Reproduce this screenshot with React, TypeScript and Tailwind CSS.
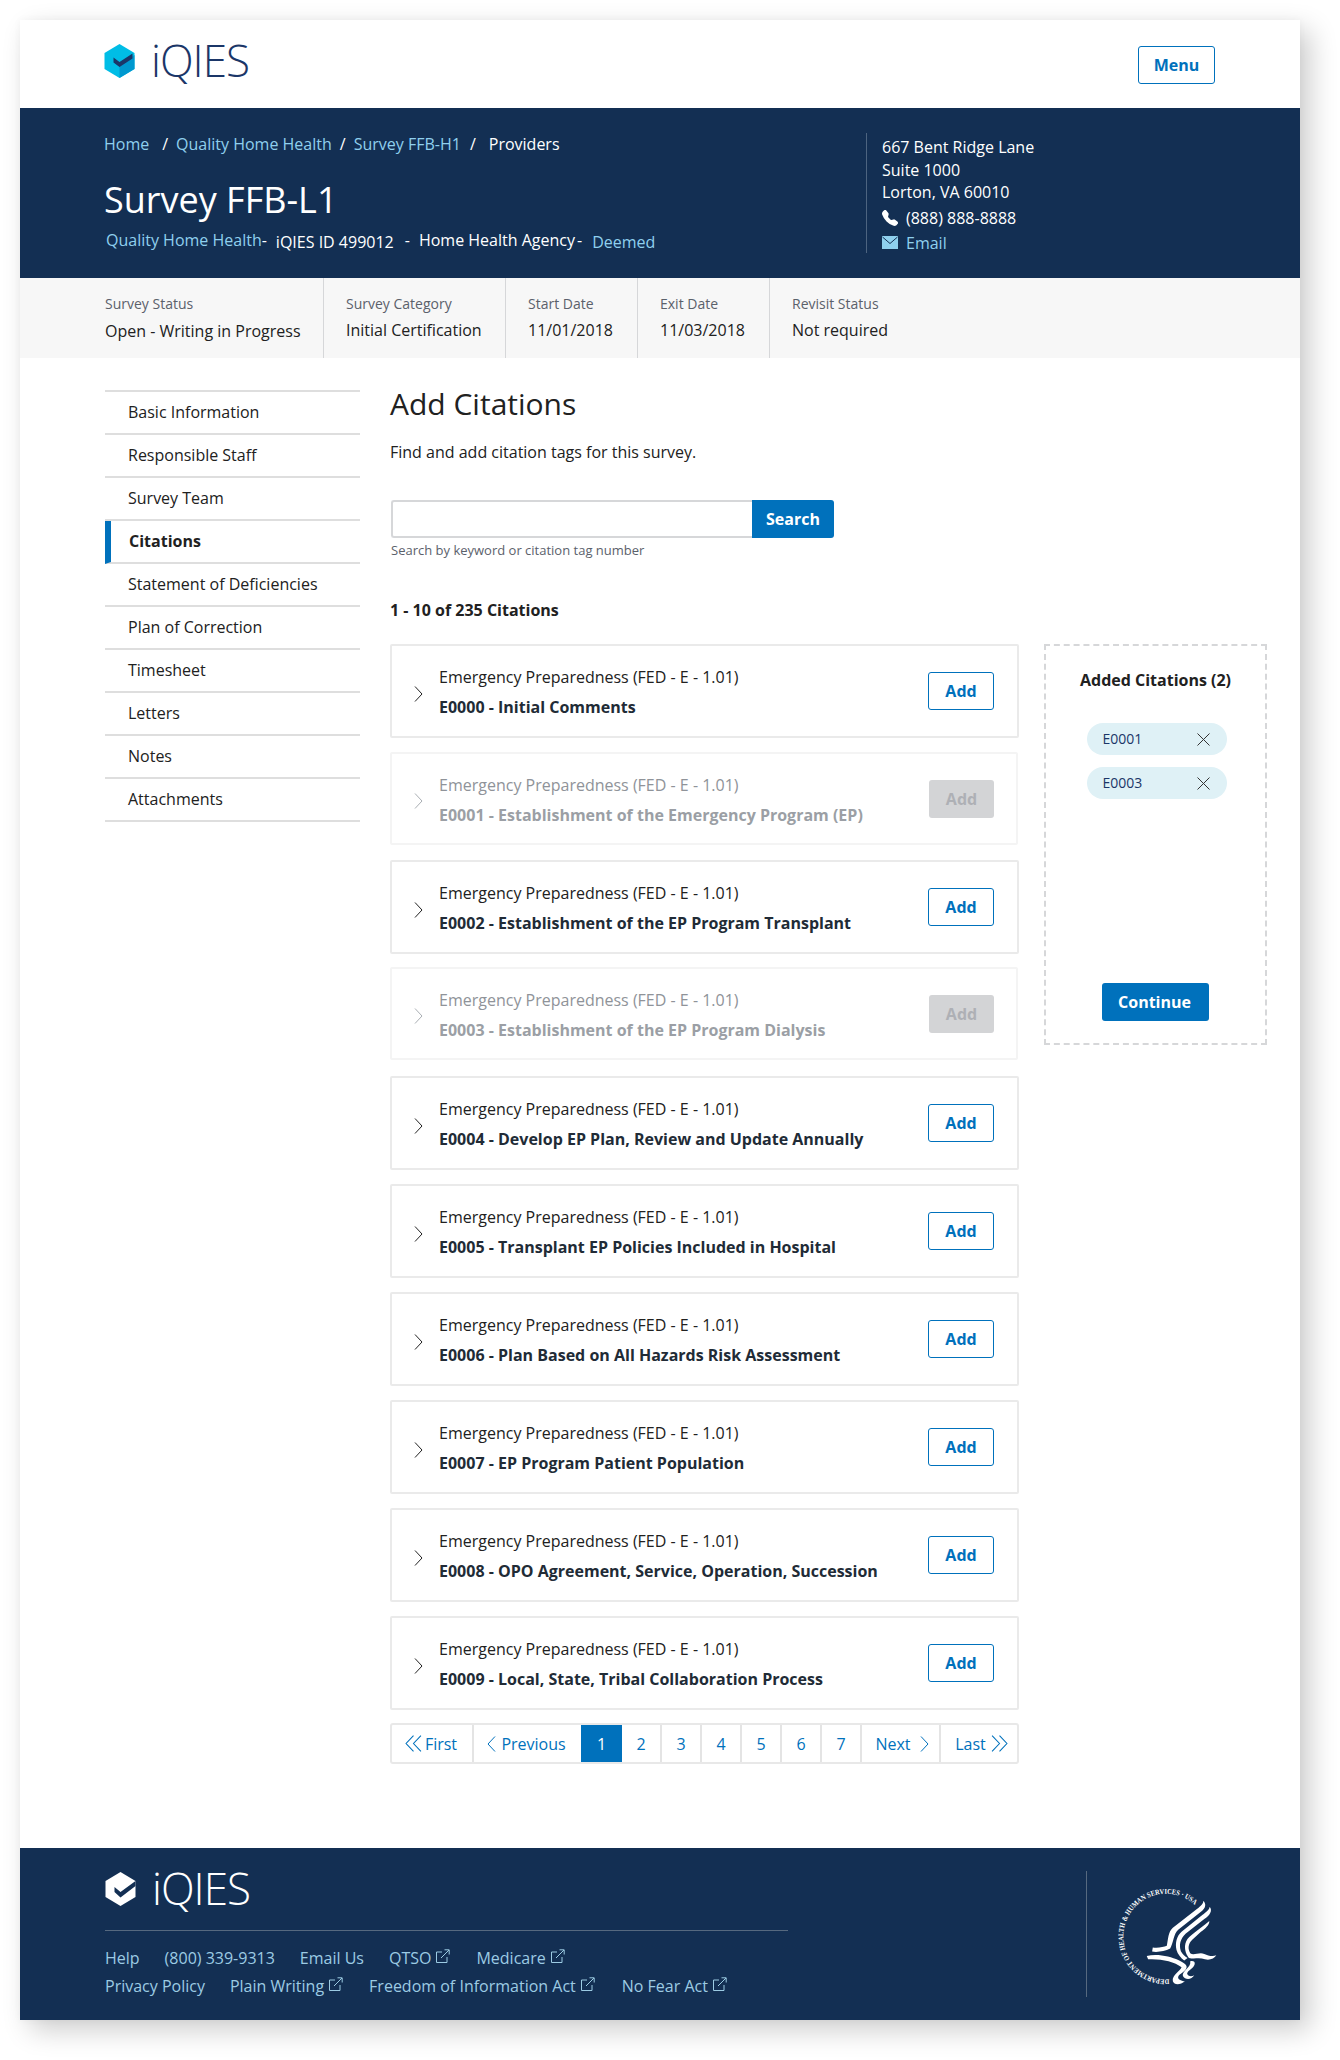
import { BsTelephoneFill } from "react-icons/bs";

const navItems = [
  "Basic Information",
  "Responsible Staff",
  "Survey Team",
  "Citations",
  "Statement of Deficiencies",
  "Plan of Correction",
  "Timesheet",
  "Letters",
  "Notes",
  "Attachments",
];

const citations = [
  { title: "E0000 - Initial Comments", gap: "mt-0" },
  { title: "E0001 - Establishment of the Emergency Program (EP)", added: true, gap: "mt-[14px]" },
  { title: "E0002 - Establishment of the EP Program Transplant", gap: "mt-[15px]" },
  { title: "E0003 - Establishment of the EP Program Dialysis", added: true, gap: "mt-[13px]" },
  { title: "E0004 - Develop EP Plan, Review and Update Annually", gap: "mt-[16px]" },
  { title: "E0005 - Transplant EP Policies Included in Hospital", gap: "mt-[14px]" },
  { title: "E0006 - Plan Based on All Hazards Risk Assessment", gap: "mt-[14px]" },
  { title: "E0007 - EP Program Patient Population", gap: "mt-[14px]" },
  { title: "E0008 - OPO Agreement, Service, Operation, Succession", gap: "mt-[14px]" },
  { title: "E0009 - Local, State, Tribal Collaboration Process", gap: "mt-[14px]" },
];

const stats = [
  { label: "Survey Status", value: "Open - Writing in Progress", cls: "w-[304px] pl-[85px] border-r", valueCls: "mt-[4px]" },
  { label: "Survey Category", value: "Initial Certification", cls: "w-[182px] pl-[22px] border-r", valueCls: "mt-[3px]" },
  { label: "Start Date", value: "11/01/2018", cls: "w-[132px] pl-[22px] border-r", valueCls: "mt-[3px]" },
  { label: "Exit Date", value: "11/03/2018", cls: "w-[132px] pl-[22px] border-r", valueCls: "mt-[3px]" },
  { label: "Revisit Status", value: "Not required", cls: "flex-1 pl-[22px]", valueCls: "mt-[3px]" },
];

function Chevron({ dir = "right", className = "" }: { dir?: "left" | "right"; className?: string }) {
  return (
    <svg width="9" height="16" viewBox="0 0 9 16" fill="none" stroke="currentColor" strokeWidth="1" className={className}>
      <polyline points={dir === "right" ? "1,0.5 8,8 1,15.5" : "8,0.5 1,8 8,15.5"} />
    </svg>
  );
}

function DoubleChevron({ dir }: { dir: "left" | "right" }) {
  return (
    <svg width="17" height="17" viewBox="0 0 16 16" fill="none" stroke="currentColor" strokeWidth="1">
      {dir === "left" ? (
        <>
          <polyline points="8,0.5 1,8 8,15.5" />
          <polyline points="15,0.5 8,8 15,15.5" />
        </>
      ) : (
        <>
          <polyline points="1,0.5 8,8 1,15.5" />
          <polyline points="8,0.5 15,8 8,15.5" />
        </>
      )}
    </svg>
  );
}

function ExternalIcon() {
  return (
    <svg width="15" height="15" viewBox="0 0 15 15" fill="none" stroke="currentColor" strokeWidth="1" className="ml-1 inline-block align-baseline">
      <path d="M7 3H1.5v10.5H12V8" />
      <path d="M6 9 14 1M9.5 0.8H14.2V5.5" />
    </svg>
  );
}

function Logo({ footer = false }: { footer?: boolean }) {
  return (
    <div className="flex h-[34px] items-center">
      <svg width="31" height="34" viewBox="0 0 30 34">
        {footer ? (
          <>
            <path d="M15 0 30 9v16l-15 9-15-9V9z" fill="#fff" />
            <path d="M9 15l6 5L30 9v5L15 25.5 9 20z" fill="#132f53" />
          </>
        ) : (
          <>
            <path d="M15 0 30 9v16l-15 9-15-9V9z" fill="#00bde6" />
            <path d="M30 11v14l-15 9V21z" fill="#0098cf" />
            <path d="M9 13.5l6 4.5 13-8.5v5L15 23l-6-4.5z" fill="#1b3668" />
          </>
        )}
      </svg>
      <span
        className={`ml-[16px] mt-[-2px] text-[44px] leading-[34px] font-light tracking-[-1px] ${footer ? "text-white" : "text-[#1b3668]"}`}
      >
        iQIES
      </span>
    </div>
  );
}

function HhsSeal() {
  return (
    <svg width="107" height="107" viewBox="160 100 320 320">
      <defs>
        <path id="seal-ring" d="M325 388A128 128 0 1 1 414 178" fill="none" />
      </defs>
      <text fill="#fff" fontSize="22" fontFamily="'Liberation Serif', serif" fontWeight="700">
        <textPath href="#seal-ring" textLength="505" lengthAdjust="spacingAndGlyphs">
          DEPARTMENT OF HEALTH &amp; HUMAN SERVICES · USA
        </textPath>
      </text>
      <g fill="#fff">
        <path d="M427 153C437 163 434 176 420 186L352 240C338 252 338 280 328 296C312 304 290 308 274 305L276 293C292 295 308 292 318 288C322 268 322 246 336 234L408 178C420 168 428 162 427 153Z" />
        <path d="M446 171C456 182 446 198 430 208L374 252C358 268 354 285 360 304C366 314 372 320 380 324L370 332C360 324 350 312 347 300C342 280 348 258 362 246L424 196C436 186 446 180 446 171Z" />
        <path d="M445 214C446 226 432 238 420 246L394 270C382 282 380 296 388 310C398 318 414 306 430 312C442 318 456 320 466 316C460 326 446 332 432 328C416 322 400 328 384 324C374 312 368 292 376 274C384 258 410 244 445 214Z" />
        <path d="M258 318C290 310 330 320 352 330C368 338 382 345 376 356C372 366 356 372 352 380C350 388 360 392 372 394C358 406 340 406 336 394C332 376 360 362 362 352C340 334 300 326 262 328Z" />
        <path d="M388 334C406 330 404 346 394 354C384 362 376 368 380 374C384 380 392 380 400 376C392 390 372 390 366 378C362 364 392 352 388 334Z" />
      </g>
    </svg>
  );
}

function CitationCard({ title, added, gap }: { title: string; added?: boolean; gap: string }) {
  return (
    <div
      className={`flex items-center rounded-[2px] border-2 ${gap} ${
        added ? "h-[93px] w-[628px] border-[#f4f4f4]" : "h-[94px] w-[629px] border-[#eaeaea]"
      }`}
    >
      <Chevron className={`ml-[22px] mt-[5px] ${added ? "text-[#a9aeb3]" : "text-[#212121]"}`} />
      <div className="ml-[16px] mt-[2px] flex-1">
        <div className={`text-[16px] leading-[24px] ${added ? "text-[#8f9399]" : "text-[#212121]"}`}>
          Emergency Preparedness (FED - E - 1.01)
        </div>
        <div className={`mt-[6px] text-[16px] leading-[24px] font-bold ${added ? "text-[#9b9fa5]" : "text-[#212b36]"}`}>{title}</div>
      </div>
      {added ? (
        <button className="mr-[22px] h-[38px] w-[65px] rounded-[3px] bg-[#d3d4d6] text-[16px] font-bold text-[#aeb0b5]">Add</button>
      ) : (
        <button className="mr-[23px] h-[38px] w-[66px] rounded-[3px] border-[1.5px] border-[#0071bc] text-[16px] font-bold text-[#0071bc]">
          Add
        </button>
      )}
    </div>
  );
}

function Chip({ code }: { code: string }) {
  return (
    <div className="flex h-[32px] w-[140px] items-center justify-between rounded-full bg-[#dff1f6] pl-[16px] pr-[16px]">
      <span className="mt-[-2px] text-[14px] text-[#1b3668]">{code}</span>
      <svg width="13" height="13" viewBox="0 0 13 13" stroke="#333" strokeWidth="1" className="mr-[1px]">
        <path d="M0.5 0.5 12.5 12.5M12.5 0.5 0.5 12.5" />
      </svg>
    </div>
  );
}

function Pagination() {
  const cell = "flex h-full items-center justify-center border-r-2 border-[#e4e4e4] text-[16px] text-[#0071bc]";
  return (
    <div className="mt-[13px] flex h-[41px] w-[629px] overflow-hidden rounded-[3px] border-2 border-[#e8e8e8]">
      <div className={`${cell} w-[82px] gap-[3px] pr-[2px]`}>
        <DoubleChevron dir="left" />
        First
      </div>
      <div className={`${cell} w-[107px] gap-[5px] pr-[2px] !border-r-0`}>
        <Chevron dir="left" />
        Previous
      </div>
      <div className="flex h-full w-[41px] items-center justify-center bg-[#0071bc] text-[16px] text-white">1</div>
      {[2, 3, 4, 5, 6, 7].map((n) => (
        <div key={n} className={`${cell} w-[40px]`}>
          {n}
        </div>
      ))}
      <div className={`${cell} w-[79px] gap-[9px] pl-[3px]`}>
        Next
        <Chevron />
      </div>
      <div className={`${cell} flex-1 gap-[5px] pl-[5px] !border-r-0`}>
        Last
        <DoubleChevron dir="right" />
      </div>
    </div>
  );
}

export default function App() {
  return (
    <div className="min-h-[2060px] w-[1340px] bg-white pl-[20px] pt-[20px] font-['Open_Sans',sans-serif] text-[#212121]">
      <div className="flex h-[2000px] w-[1280px] flex-col bg-white shadow-[10px_10px_26px_rgba(0,0,0,0.2),0_0_8px_rgba(0,0,0,0.04)]">
        {/* top header */}
        <header className="flex h-[88px] items-center justify-between pl-[84px] pr-[85px]">
          <div className="mt-[-6px]">
            <Logo />
          </div>
          <button className="mt-[1px] h-[38px] w-[77px] rounded-[3px] border-[1.5px] border-[#0071bc] text-[16px] font-bold text-[#0071bc]">
            Menu
          </button>
        </header>

        {/* survey band */}
        <section className="flex h-[170px] bg-[#132f53] text-white">
          <div className="w-[846px] pl-[84px] pt-[24px]">
            <nav className="flex h-[24px] items-center text-[16px] leading-[24px]">
              <span className="text-[#8fd0ee]">Home</span>
              <span className="ml-[13px]">/</span>
              <span className="ml-[8px] text-[#8fd0ee]">Quality Home Health</span>
              <span className="ml-[8px]">/</span>
              <span className="ml-[8px] text-[#8fd0ee]">Survey FFB-H1</span>
              <span className="ml-[9px]">/</span>
              <span className="ml-[13px]">Providers</span>
            </nav>
            <h1 className="mt-[20px] text-[36px] leading-[48px] font-normal">Survey FFB-L1</h1>
            <div className="mt-[4px] flex items-start pl-[2px] text-[16px] leading-[24px]">
              <span className="text-[#8fd0ee]">Quality Home Health</span>
              <span>-</span>
              <span className="ml-[9px] mt-[2px]">iQIES ID 499012</span>
              <span className="ml-[11px]">-</span>
              <span className="ml-[9px]">Home Health Agency</span>
              <span className="ml-[2px]">-</span>
              <span className="ml-[10px] mt-[2px] text-[#8fd0ee]">Deemed</span>
            </div>
          </div>
          <div className="mt-[25px] h-[120px] border-l border-[#4d6480] pl-[15px] pt-[3px] text-[16px]">
            <div className="leading-[22.5px]">667 Bent Ridge Lane</div>
            <div className="leading-[22.5px]">Suite 1000</div>
            <div className="leading-[22.5px]">Lorton, VA 60010</div>
            <div className="mt-[2px] flex items-center leading-[24px]">
              <BsTelephoneFill className="h-[16px] w-[16px]" />
              <span className="ml-[8px]">(888) 888-8888</span>
            </div>
            <div className="flex items-center leading-[26px] text-[#8fd0ee]">
              <svg width="16" height="13" viewBox="0 0 16 13">
                <rect width="16" height="13" fill="#8fd0ee" />
                <path d="M0.5 1 8 7.5 15.5 1" fill="none" stroke="#132f53" strokeWidth="1" />
              </svg>
              <span className="ml-[8px]">Email</span>
            </div>
          </div>
        </section>

        {/* status strip */}
        <section className="flex h-[80px] bg-[#f7f7f7]">
          {stats.map((s) => (
            <div key={s.label} className={`${s.cls} border-[#d6d7d9] pt-[15px]`}>
              <div className="text-[14px] leading-[22px] text-[#5b616b]">{s.label}</div>
              <div className={`${s.valueCls} text-[16px] leading-[24px] text-[#212121]`}>{s.value}</div>
            </div>
          ))}
        </section>

        {/* main */}
        <main className="flex flex-1 pl-[85px] pt-[26px]">
          <aside className="mt-[6px] h-fit w-[255px] border-t-2 border-[#dedede]">
            {navItems.map((item) => {
              const active = item === "Citations";
              return (
                <div
                  key={item}
                  className={`flex h-[43px] items-center border-b-2 border-[#dedede] pb-[2px] text-[16px] ${
                    active ? "border-l-[6px] border-l-[#0071bc] pl-[18px] font-bold" : "pl-[23px]"
                  }`}
                >
                  {item}
                </div>
              );
            })}
          </aside>

          <div className="ml-[30px]">
            <h2 className="h-[40px] text-[30px] leading-[40px] font-normal">Add Citations</h2>
            <p className="mt-[16px] text-[16px] leading-[24px]">Find and add citation tags for this survey.</p>
            <div className="mt-[36px] flex items-center pl-[1px]">
              <input className="h-[38px] w-[361px] rounded-l-[3px] border-2 border-r-0 border-[#d6d7d9] bg-white" />
              <button className="h-[38px] w-[82px] rounded-r-[3px] bg-[#0071bc] text-[16px] font-bold text-white">Search</button>
            </div>
            <div className="mt-[3px] pl-[1px] text-[13px] leading-[18px] text-[#5b616b]">Search by keyword or citation tag number</div>
            <div className="mt-[39px] text-[16px] leading-[24px] font-bold">1 - 10 of 235 Citations</div>

            <div className="mt-[22px] flex items-start">
              <div>
                <div className="flex flex-col">
                  {citations.map((c) => (
                    <CitationCard key={c.title} title={c.title} added={c.added} gap={c.gap} />
                  ))}
                </div>
                <Pagination />
              </div>

              <div className="ml-[25px] flex h-[401px] w-[223px] flex-col items-center border-2 border-dashed border-[#d6d7d9] pt-[22px]">
                <div className="text-[16px] leading-[24px] font-bold">Added Citations (2)</div>
                <div className="ml-[2px] mt-[31px] flex flex-col gap-[12px]">
                  <Chip code="E0001" />
                  <Chip code="E0003" />
                </div>
                <button className="mt-[184px] h-[38px] w-[107px] rounded-[3px] bg-[#0071bc] pr-[2px] text-[16px] font-bold text-white">Continue</button>
              </div>
            </div>
          </div>
        </main>

        {/* footer */}
        <footer className="flex h-[172px] bg-[#132f53]">
          <div className="w-[1066px] pl-[85px] pt-[24px]">
            <div className="w-[683px] border-b border-[#56697f] pb-[24px]">
              <Logo footer />
            </div>
            <div className="mt-[14px] flex text-[16px] leading-[26px] text-[#9ccbe3]">
              <span>Help</span>
              <span className="ml-[25px]">(800) 339-9313</span>
              <span className="ml-[25px]">Email Us</span>
              <span className="ml-[25px]">QTSO<ExternalIcon /></span>
              <span className="ml-[26px]">Medicare<ExternalIcon /></span>
            </div>
            <div className="mt-[2px] flex text-[16px] leading-[26px] text-[#9ccbe3]">
              <span>Privacy Policy</span>
              <span className="ml-[25px]">Plain Writing<ExternalIcon /></span>
              <span className="ml-[26px]">Freedom of Information Act<ExternalIcon /></span>
              <span className="ml-[27px]">No Fear Act<ExternalIcon /></span>
            </div>
          </div>
          <div className="mt-[23px] h-[126px] border-l border-[#56697f] pl-[27px] pt-[12px]">
            <HhsSeal />
          </div>
        </footer>
      </div>
    </div>
  );
}
